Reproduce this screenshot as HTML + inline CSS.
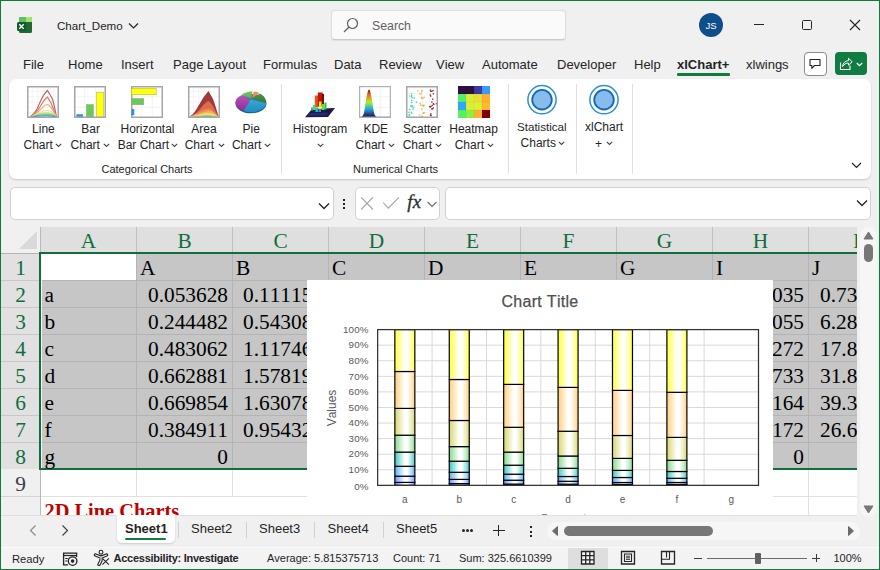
<!DOCTYPE html>
<html><head><meta charset="utf-8"><style>
html,body{margin:0;padding:0;}
body{width:880px;height:570px;position:relative;overflow:hidden;background:#f0f0f0;font-family:'Liberation Sans', sans-serif;}
.t{position:absolute;white-space:nowrap;line-height:0;font-kerning:none;}
</style></head><body>
<svg style="position:absolute;left:16px;top:16px" width="18" height="18" viewBox="0 0 18 18">
<rect x="3" y="1" width="13" height="16" rx="1.5" fill="#1f6b2f"/>
<path d="M4.5 1 H9.5 V6 H3 V2.5 A1.5 1.5 0 0 1 4.5 1Z" fill="#5ec35c"/>
<path d="M9.5 1 H14.5 A1.5 1.5 0 0 1 16 2.5 V6 H9.5Z" fill="#a6e26f"/>
<rect x="1" y="6" width="9" height="9" rx="1.5" fill="#0f5a2c"/>
<path d="M3.3 8.2 L7.7 12.8 M7.7 8.2 L3.3 12.8" stroke="#fff" stroke-width="1.4"/>
</svg>
<div class="t" style="left:57px;top:25.98px;font-size:11.6px;color:#242424;font-weight:400;font-family:'Liberation Sans', sans-serif;">Chart_Demo</div>
<svg style="position:absolute;left:128px;top:21.7px" width="11" height="8"><path d="M1 1.5 L5.5 6 L10 1.5" stroke="#242424" stroke-width="1.2" fill="none"/></svg>
<div style="position:absolute;left:331px;top:9.5px;width:235px;height:30.5px;box-sizing:border-box;background:#fafafa;border:1px solid #dedede;border-bottom-color:#c9c9c9;border-radius:4px;box-shadow:0 0.5px 1px rgba(0,0,0,0.08);"></div>
<svg style="position:absolute;left:343px;top:17px" width="16" height="16" viewBox="0 0 16 16"><circle cx="9.5" cy="6.5" r="5" stroke="#616161" stroke-width="1.2" fill="none"/><path d="M6 10 L1 15" stroke="#616161" stroke-width="1.3"/></svg>
<div class="t" style="left:372px;top:26.14px;font-size:12.3px;color:#616161;font-weight:400;font-family:'Liberation Sans', sans-serif;">Search</div>
<div style="position:absolute;left:699px;top:12.5px;width:24px;height:24px;border-radius:50%;background:#0f4d8c;"></div>
<div class="t" style="left:711px;transform:translateX(-50%);top:25.71px;font-size:9.5px;color:#ffffff;font-weight:400;font-family:'Liberation Sans', sans-serif;">JS</div>
<div style="position:absolute;left:754px;top:24px;width:10px;height:1px;background:#242424;"></div>
<div style="position:absolute;left:802px;top:20px;width:10px;height:10px;box-sizing:border-box;border:1px solid #242424;border-radius:1.5px;"></div>
<svg style="position:absolute;left:849px;top:19px" width="12" height="12"><path d="M1 1 L11 11 M11 1 L1 11" stroke="#242424" stroke-width="1.1"/></svg>
<div class="t" style="left:23px;top:64.80px;font-size:13px;color:#242424;font-weight:400;font-family:'Liberation Sans', sans-serif;">File</div>
<div class="t" style="left:68px;top:64.80px;font-size:13px;color:#242424;font-weight:400;font-family:'Liberation Sans', sans-serif;">Home</div>
<div class="t" style="left:121px;top:64.80px;font-size:13px;color:#242424;font-weight:400;font-family:'Liberation Sans', sans-serif;">Insert</div>
<div class="t" style="left:173px;top:64.80px;font-size:13px;color:#242424;font-weight:400;font-family:'Liberation Sans', sans-serif;">Page Layout</div>
<div class="t" style="left:263px;top:64.80px;font-size:13px;color:#242424;font-weight:400;font-family:'Liberation Sans', sans-serif;">Formulas</div>
<div class="t" style="left:334px;top:64.80px;font-size:13px;color:#242424;font-weight:400;font-family:'Liberation Sans', sans-serif;">Data</div>
<div class="t" style="left:379px;top:64.80px;font-size:13px;color:#242424;font-weight:400;font-family:'Liberation Sans', sans-serif;">Review</div>
<div class="t" style="left:436px;top:64.80px;font-size:13px;color:#242424;font-weight:400;font-family:'Liberation Sans', sans-serif;">View</div>
<div class="t" style="left:482px;top:64.80px;font-size:13px;color:#242424;font-weight:400;font-family:'Liberation Sans', sans-serif;">Automate</div>
<div class="t" style="left:557px;top:64.80px;font-size:13px;color:#242424;font-weight:400;font-family:'Liberation Sans', sans-serif;">Developer</div>
<div class="t" style="left:634px;top:64.80px;font-size:13px;color:#242424;font-weight:400;font-family:'Liberation Sans', sans-serif;">Help</div>
<div class="t" style="left:746px;top:64.80px;font-size:13px;color:#242424;font-weight:400;font-family:'Liberation Sans', sans-serif;">xlwings</div>
<div class="t" style="left:677px;top:64.80px;font-size:13px;color:#242424;font-weight:700;font-family:'Liberation Sans', sans-serif;">xlChart+</div>
<div style="position:absolute;left:677px;top:73px;width:53px;height:2.5px;background:#107c41;border-radius:1px;"></div>
<div style="position:absolute;left:803.5px;top:52px;width:23.5px;height:23.5px;box-sizing:border-box;background:#fff;border:1px solid #8a8a8a;border-radius:4px;"></div>
<svg style="position:absolute;left:808px;top:57px" width="15" height="14" viewBox="0 0 15 14"><path d="M2 2.5 H12 V8.5 H6.5 L3.8 11.3 V8.5 H2Z" stroke="#242424" stroke-width="1.1" fill="none" stroke-linejoin="round"/></svg>
<div style="position:absolute;left:835px;top:52px;width:32px;height:23px;background:#107c41;border-radius:4px;"></div>
<svg style="position:absolute;left:839px;top:56px" width="26" height="15" viewBox="0 0 26 15"><path d="M1.5 6.5 V13.5 H11 V9.5" stroke="#fff" stroke-width="1.1" fill="none"/><path d="M3.5 10.5 C3.8 6.8 6.5 4.8 9.5 4.6 V2.2 L13.2 5.8 L9.5 9.2 V7 C7.2 7 5 8.2 3.5 10.5Z" stroke="#fff" stroke-width="1" fill="none" stroke-linejoin="round"/><path d="M17.8 7 L20.5 9.6 L23.2 7" stroke="#fff" stroke-width="1.3" fill="none"/></svg>
<div style="position:absolute;left:9px;top:79px;width:862px;height:100px;background:#fff;border-radius:7px;box-shadow:0 1px 2px rgba(0,0,0,0.18);"></div>
<svg style="position:absolute;left:27px;top:86px" width="32" height="32" viewBox="0 0 32 32"><rect width="32" height="32" fill="#fff"/><path d="M5.3 1 V31 M1 5.3 H31" stroke="#f2f2f2" stroke-width="0.8"/><path d="M10.7 1 V31 M1 10.7 H31" stroke="#f2f2f2" stroke-width="0.8"/><path d="M16.0 1 V31 M1 16.0 H31" stroke="#f2f2f2" stroke-width="0.8"/><path d="M21.3 1 V31 M1 21.3 H31" stroke="#f2f2f2" stroke-width="0.8"/><path d="M26.7 1 V31 M1 26.7 H31" stroke="#f2f2f2" stroke-width="0.8"/><path d="M3 31 C6 29 8 27 10 23 L15 12 C17 8 19 6 20.5 4.5 L25 12 C27 17 28 24 29.5 31" stroke="#b86a66" stroke-width="1.2" fill="none"/><path d="M3.5 31 C7 29 9 27 11 24 L16 16 C18 13 19 12 20.5 11 L24 17 C26 22 28 27 29.5 31" stroke="#d77a5c" stroke-width="1.2" fill="none"/><path d="M4 31 C8 29 11 26 14 23 C17 20 19 18.5 20.5 18.5 C23 19 26 24 29.5 31" stroke="#f3a77a" stroke-width="1.2" fill="none"/><path d="M4 31 C9 28 14 25 20 24.5 C24 24.5 27 27 29.5 31" stroke="#f5d58a" stroke-width="1.2" fill="none"/><path d="M4 31 C10 28 15 27 19 27 C24 27 27 28 29.5 31" stroke="#c8e070" stroke-width="1.3" fill="none"/><path d="M4 31 C10 29 15 28.5 19 28.5 C24 28.5 27 29 29.5 31" stroke="#50d890" stroke-width="1.3" fill="none"/><path d="M4 31.2 C10 30 15 29.8 19 29.8 C24 29.8 27 30.2 29.5 31.2" stroke="#3a8ee0" stroke-width="1.3" fill="none"/><rect x="0.75" y="0.75" width="30.5" height="30.5" fill="none" stroke="#a6a6a6" stroke-width="1.5"/></svg>
<svg style="position:absolute;left:74px;top:86px" width="32" height="32" viewBox="0 0 32 32"><rect width="32" height="32" fill="#fff"/><path d="M10.7 1 V31 M1 10.7 H31" stroke="#f0f0f0" stroke-width="0.8"/><path d="M21.3 1 V31 M1 21.3 H31" stroke="#f0f0f0" stroke-width="0.8"/><rect x="2.3" y="28.3" width="6.8" height="3" rx="0.5" fill="#2f8fe6"/><rect x="12.3" y="18.5" width="7.2" height="12.8" fill="#6cc85c" stroke="#8fb070" stroke-width="0.5"/><rect x="22.6" y="6.2" width="7" height="25.1" fill="#ffff10" stroke="#b8b840" stroke-width="0.6"/><rect x="0.75" y="0.75" width="30.5" height="30.5" fill="none" stroke="#a6a6a6" stroke-width="1.5"/></svg>
<svg style="position:absolute;left:131px;top:86px" width="32" height="32" viewBox="0 0 32 32"><rect width="32" height="32" fill="#fff"/><path d="M10.7 1 V31 M1 10.7 H31" stroke="#f0f0f0" stroke-width="0.8"/><path d="M21.3 1 V31 M1 21.3 H31" stroke="#f0f0f0" stroke-width="0.8"/><rect x="0.75" y="0.75" width="30.5" height="30.5" fill="none" stroke="#a6a6a6" stroke-width="1.5"/><rect x="0.5" y="2.4" width="24.7" height="6.3" fill="#ffff10" stroke="#b8b840" stroke-width="0.6"/><rect x="0.5" y="12.5" width="12.3" height="6.3" fill="#6cc85c" stroke="#8fb070" stroke-width="0.5"/><rect x="0.5" y="23" width="2.8" height="6.3" rx="0.6" fill="#2f8fe6"/></svg>
<svg style="position:absolute;left:188px;top:86px" width="32" height="32" viewBox="0 0 32 32"><rect width="32" height="32" fill="#fff"/><path d="M5.3 1 V31 M1 5.3 H31" stroke="#f2f2f2" stroke-width="0.8"/><path d="M10.7 1 V31 M1 10.7 H31" stroke="#f2f2f2" stroke-width="0.8"/><path d="M16.0 1 V31 M1 16.0 H31" stroke="#f2f2f2" stroke-width="0.8"/><path d="M21.3 1 V31 M1 21.3 H31" stroke="#f2f2f2" stroke-width="0.8"/><path d="M26.7 1 V31 M1 26.7 H31" stroke="#f2f2f2" stroke-width="0.8"/><path d="M1 31.2 C4 29 6 27 8 24 L15 12 C17 9 19 7 20.5 5 L25 13 C27 18 29 25 30.8 31.2Z" fill="#9e3a3a"/><path d="M1 31.2 C5 29 9 27 12 23 C15 19 18 16 20.5 15 C23 16 26 22 30.8 31.2Z" fill="#e06a4c"/><path d="M1 31.2 C6 29 11 26 15 24 C18 23 20 22.5 21 22.5 C24 23 27 27 30.8 31.2Z" fill="#f08a50"/><path d="M1 31.2 C7 29 12 27 16 26 C19 25.2 21 25 22 25 C25 25.5 28 28 30.8 31.2Z" fill="#f8b070"/><path d="M1 31.2 C8 29.5 13 28 17 27.5 C20 27.2 22 27.2 23 27.4 C26 28 28.5 29.5 30.8 31.2Z" fill="#f0e070"/><path d="M1 31.2 C8 30.5 13 29.6 18 29.3 C22 29.2 26 29.6 30.8 31.2Z" fill="#70d860"/><path d="M1.5 31.2 C8 31 13 30.5 18 30.4 C23 30.4 26 30.7 30.5 31.2Z" fill="#40c8d8"/><rect x="0.75" y="0.75" width="30.5" height="30.5" fill="none" stroke="#a6a6a6" stroke-width="1.5"/></svg>
<svg style="position:absolute;left:233px;top:84px" width="36" height="36" viewBox="0 0 36 36"><defs><linearGradient id="pshade" x1="0" y1="0" x2="0" y2="1"><stop offset="0" stop-color="#fff" stop-opacity="0.25"/><stop offset="1" stop-color="#000" stop-opacity="0.15"/></linearGradient></defs><ellipse cx="18" cy="19.5" rx="15.5" ry="9.8" fill="#1a6aa0"/><path d="M17.5 15.5 L8.5 11.3 C5 13 2.5 15.5 2.5 18.5 C2.5 21.5 5 24.5 9.5 26.5 L10.5 27Z" fill="#b030b0"/><path d="M17.5 15.5 L10.5 27 C13 27.8 15.5 28.3 18 28.3 C25 28.3 31 25 32.8 20.5 L33 19Z" fill="#22a8e2"/><path d="M18.5 14.5 L33 19 C33 14.5 31 11.8 27 9.8Z" fill="#1e7a22"/><path d="M19 14 L26.5 9.2 C24.5 8.3 22.5 7.8 20.8 7.6Z" fill="#f07828"/><path d="M18 14.5 L19.5 7.5 C15 7.5 11 8.8 8.5 11Z" fill="#48b030"/><ellipse cx="18" cy="18.5" rx="15.5" ry="10.5" fill="url(#pshade)"/></svg>
<svg style="position:absolute;left:302px;top:84px" width="36" height="36" viewBox="0 0 36 36"><path d="M10 25 L33 24 L26 33 L3 33.2Z" fill="#1c1848"/><path d="M8 29 L27 28.5 L24 31.5 L6 31.8Z" fill="#2850c0" opacity="0.35"/><path d="M5 24 L10 3 M7 24 L12 4 H33 M10 8 H33 M10 12 H33 M9 16 H33 M8 20 H33" stroke="#f2f2f2" stroke-width="0.7" fill="none"/><rect x="12.8" y="11.5" width="3.6" height="12" fill="#f05018"/><rect x="15.8" y="8.5" width="5" height="14" fill="#b81810"/><rect x="20" y="10" width="2" height="11" fill="#800808"/><rect x="17" y="17.5" width="2.5" height="8" fill="#f0f020"/><rect x="11" y="21" width="2.6" height="5" fill="#40e060"/><rect x="20" y="20" width="2.5" height="6" fill="#60e040"/><rect x="22.5" y="18.5" width="2" height="7" fill="#30c060"/><rect x="13.5" y="24" width="2.5" height="4" fill="#20c0c0"/><rect x="16.5" y="25" width="2.5" height="3" fill="#2090e0"/><rect x="9" y="23.5" width="2" height="3" fill="#30b0a0"/></svg>
<svg style="position:absolute;left:359px;top:86px" width="32" height="32" viewBox="0 0 32 32"><defs><linearGradient id="kde" x1="0" y1="0" x2="0" y2="1"><stop offset="0" stop-color="#800010"/><stop offset="0.2" stop-color="#f07020"/><stop offset="0.45" stop-color="#b0f020"/><stop offset="0.7" stop-color="#20b0e0"/><stop offset="0.85" stop-color="#2a5a90"/><stop offset="1" stop-color="#201040"/></linearGradient></defs><rect width="32" height="32" fill="#fff"/><path d="M10.7 1 V31 M1 10.7 H31" stroke="#f0f0f0" stroke-width="0.8"/><path d="M21.3 1 V31 M1 21.3 H31" stroke="#f0f0f0" stroke-width="0.8"/><path d="M2 31 C4.5 30.5 5 27 5.8 22 C6.8 15 8.5 4 10 3.6 C11.5 4 13.2 15 14.2 22 C15 27 15.5 30.5 18 31Z" fill="url(#kde)"/><path d="M1 31.2 H31" stroke="#8080ff" stroke-width="1.2"/><rect x="0.6" y="0.6" width="30.8" height="30.8" fill="none" stroke="#b0b0b0" stroke-width="1.2"/></svg>
<svg style="position:absolute;left:406px;top:86px" width="32" height="32" viewBox="0 0 32 32"><rect width="32" height="32" fill="#fff"/><path d="M8.0 1 V31 M1 8.0 H31" stroke="#f0f0f0" stroke-width="0.8"/><path d="M16.0 1 V31 M1 16.0 H31" stroke="#f0f0f0" stroke-width="0.8"/><path d="M24.0 1 V31 M1 24.0 H31" stroke="#f0f0f0" stroke-width="0.8"/><rect x="3.0" y="9.4" width="1.3" height="1.3" fill="#3ad8b8"/><rect x="4.1" y="19.3" width="1.3" height="1.3" fill="#3ad8b8"/><rect x="4.7" y="19.9" width="1.3" height="1.3" fill="#3ad8b8"/><rect x="4.6" y="25.6" width="1.3" height="1.3" fill="#3ad8b8"/><rect x="5.0" y="10.0" width="1.3" height="1.3" fill="#3ad8b8"/><rect x="9.8" y="15.7" width="1.3" height="1.3" fill="#3ad8b8"/><rect x="2.2" y="25.6" width="1.3" height="1.3" fill="#3ad8b8"/><rect x="4.8" y="7.1" width="1.3" height="1.3" fill="#3ad8b8"/><rect x="5.8" y="20.1" width="1.3" height="1.3" fill="#3ad8b8"/><rect x="3.1" y="23.0" width="1.3" height="1.3" fill="#3ad8b8"/><rect x="7.0" y="21.1" width="1.3" height="1.3" fill="#3ad8b8"/><rect x="5.6" y="19.0" width="1.3" height="1.3" fill="#3ad8b8"/><rect x="7.6" y="11.1" width="1.3" height="1.3" fill="#3ad8b8"/><rect x="5.1" y="15.8" width="1.3" height="1.3" fill="#3ad8b8"/><rect x="6.3" y="22.4" width="1.3" height="1.3" fill="#3ad8b8"/><rect x="2.8" y="27.9" width="1.3" height="1.3" fill="#3ad8b8"/><rect x="5.0" y="13.7" width="1.3" height="1.3" fill="#3ad8b8"/><rect x="2.9" y="28.3" width="1.3" height="1.3" fill="#3ad8b8"/><rect x="5.2" y="26.7" width="1.3" height="1.3" fill="#3ad8b8"/><rect x="5.0" y="8.9" width="1.3" height="1.3" fill="#3ad8b8"/><rect x="2.4" y="29.1" width="1.3" height="1.3" fill="#3ad8b8"/><rect x="5.4" y="11.1" width="1.3" height="1.3" fill="#3ad8b8"/><rect x="13.4" y="16.7" width="1.3" height="1.3" fill="#f5b030"/><rect x="15.5" y="18.8" width="1.3" height="1.3" fill="#f5b030"/><rect x="16.5" y="18.8" width="1.3" height="1.3" fill="#f5b030"/><rect x="13.1" y="28.1" width="1.3" height="1.3" fill="#f5b030"/><rect x="16.9" y="26.1" width="1.3" height="1.3" fill="#f5b030"/><rect x="14.4" y="7.4" width="1.3" height="1.3" fill="#f5b030"/><rect x="17.9" y="26.2" width="1.3" height="1.3" fill="#f5b030"/><rect x="13.7" y="18.4" width="1.3" height="1.3" fill="#f5b030"/><rect x="15.2" y="22.3" width="1.3" height="1.3" fill="#f5b030"/><rect x="17.4" y="18.5" width="1.3" height="1.3" fill="#f5b030"/><rect x="17.4" y="10.7" width="1.3" height="1.3" fill="#f5b030"/><rect x="15.7" y="29.7" width="1.3" height="1.3" fill="#f5b030"/><rect x="15.0" y="5.4" width="1.3" height="1.3" fill="#f5b030"/><rect x="12.9" y="7.1" width="1.3" height="1.3" fill="#f5b030"/><rect x="14.9" y="10.9" width="1.3" height="1.3" fill="#f5b030"/><rect x="11.3" y="4.2" width="1.3" height="1.3" fill="#f5b030"/><rect x="16.9" y="19.6" width="1.3" height="1.3" fill="#f5b030"/><rect x="15.2" y="11.9" width="1.3" height="1.3" fill="#f5b030"/><rect x="16.4" y="26.8" width="1.3" height="1.3" fill="#f5b030"/><rect x="14.3" y="30.0" width="1.3" height="1.3" fill="#f5b030"/><rect x="16.4" y="11.4" width="1.3" height="1.3" fill="#f5b030"/><rect x="15.5" y="3.8" width="1.3" height="1.3" fill="#f5b030"/><rect x="23.7" y="8.3" width="1.3" height="1.3" fill="#902028"/><rect x="26.7" y="7.2" width="1.3" height="1.3" fill="#902028"/><rect x="26.4" y="4.1" width="1.3" height="1.3" fill="#902028"/><rect x="24.5" y="28.9" width="1.3" height="1.3" fill="#902028"/><rect x="24.2" y="27.2" width="1.3" height="1.3" fill="#902028"/><rect x="26.7" y="17.0" width="1.3" height="1.3" fill="#902028"/><rect x="23.8" y="20.4" width="1.3" height="1.3" fill="#902028"/><rect x="24.3" y="19.7" width="1.3" height="1.3" fill="#902028"/><rect x="23.8" y="28.4" width="1.3" height="1.3" fill="#902028"/><rect x="25.4" y="22.4" width="1.3" height="1.3" fill="#902028"/><rect x="24.1" y="9.4" width="1.3" height="1.3" fill="#902028"/><rect x="29.7" y="17.1" width="1.3" height="1.3" fill="#902028"/><rect x="27.2" y="17.8" width="1.3" height="1.3" fill="#902028"/><rect x="25.6" y="18.7" width="1.3" height="1.3" fill="#902028"/><rect x="23.8" y="3.5" width="1.3" height="1.3" fill="#902028"/><rect x="24.0" y="4.6" width="1.3" height="1.3" fill="#902028"/><rect x="23.1" y="19.9" width="1.3" height="1.3" fill="#902028"/><rect x="26.0" y="12.5" width="1.3" height="1.3" fill="#902028"/><rect x="25.5" y="22.1" width="1.3" height="1.3" fill="#902028"/><rect x="25.2" y="4.6" width="1.3" height="1.3" fill="#902028"/><rect x="26.7" y="21.3" width="1.3" height="1.3" fill="#902028"/><rect x="25.2" y="15.3" width="1.3" height="1.3" fill="#902028"/><rect x="0.75" y="0.75" width="30.5" height="30.5" fill="none" stroke="#a6a6a6" stroke-width="1.5"/></svg>
<svg style="position:absolute;left:458px;top:86px" width="32" height="32" viewBox="0 0 32 32"><rect x="0" y="0" width="8" height="8" fill="#2d0f40"/><rect x="8" y="0" width="8" height="8" fill="#2d0f40"/><rect x="16" y="0" width="8" height="8" fill="#3a3aa0"/><rect x="24" y="0" width="8" height="8" fill="#3a9aff"/><rect x="0" y="8" width="8" height="8" fill="#58ee68"/><rect x="8" y="8" width="8" height="8" fill="#d8ee38"/><rect x="16" y="8" width="8" height="8" fill="#ecdc38"/><rect x="24" y="8" width="8" height="8" fill="#ffb030"/><rect x="0" y="16" width="8" height="8" fill="#2ea8ff"/><rect x="8" y="16" width="8" height="8" fill="#dcee38"/><rect x="16" y="16" width="8" height="8" fill="#dcf038"/><rect x="24" y="16" width="8" height="8" fill="#ffb830"/><rect x="0" y="24" width="8" height="8" fill="#58f060"/><rect x="8" y="24" width="8" height="8" fill="#8cf040"/><rect x="16" y="24" width="8" height="8" fill="#ffb030"/><rect x="24" y="24" width="8" height="8" fill="#800000"/><path d="M0 8 H32 M0 16 H32 M0 24 H32 M8 0 V32 M16 0 V32 M24 0 V32" stroke="#000" stroke-opacity="0.08" stroke-width="0.6"/></svg>
<div style="position:absolute;left:281px;top:84px;width:1px;height:90px;background:#e0e0e0;"></div>
<div style="position:absolute;left:508px;top:84px;width:1px;height:90px;background:#e0e0e0;"></div>
<div style="position:absolute;left:576px;top:84px;width:1px;height:90px;background:#e0e0e0;"></div>
<div style="position:absolute;left:632px;top:84px;width:1px;height:90px;background:#e0e0e0;"></div>
<svg style="position:absolute;left:526px;top:84px" width="32" height="32"><circle cx="16" cy="15.7" r="14.1" fill="none" stroke="#2a92d8" stroke-width="1.5"/><circle cx="16" cy="15.7" r="9.8" fill="#86bdea" stroke="#1565c0" stroke-width="1.8"/></svg>
<svg style="position:absolute;left:588px;top:84px" width="32" height="32"><circle cx="16" cy="15.7" r="14.1" fill="none" stroke="#2a92d8" stroke-width="1.5"/><circle cx="16" cy="15.7" r="9.8" fill="#86bdea" stroke="#1565c0" stroke-width="1.8"/></svg>
<div class="t" style="left:43.4px;transform:translateX(-50%);top:128.59px;font-size:12px;color:#242424;font-weight:400;font-family:'Liberation Sans', sans-serif;">Line</div>
<div class="t" style="left:23.5px;top:144.84px;font-size:12px;color:#242424;font-weight:400;font-family:'Liberation Sans', sans-serif;">Chart</div>
<svg style="position:absolute;left:55px;top:142.5px" width="7" height="5"><path d="M0.8 0.8 L3.5 3.5 L6.2 0.8" stroke="#424242" stroke-width="1.1" fill="none"/></svg>
<div class="t" style="left:90.6px;transform:translateX(-50%);top:128.59px;font-size:12px;color:#242424;font-weight:400;font-family:'Liberation Sans', sans-serif;">Bar</div>
<div class="t" style="left:70.6px;top:144.84px;font-size:12px;color:#242424;font-weight:400;font-family:'Liberation Sans', sans-serif;">Chart</div>
<svg style="position:absolute;left:103px;top:142.5px" width="7" height="5"><path d="M0.8 0.8 L3.5 3.5 L6.2 0.8" stroke="#424242" stroke-width="1.1" fill="none"/></svg>
<div class="t" style="left:147.5px;transform:translateX(-50%);top:128.59px;font-size:12px;color:#242424;font-weight:400;font-family:'Liberation Sans', sans-serif;">Horizontal</div>
<div class="t" style="left:117.7px;top:144.84px;font-size:12px;color:#242424;font-weight:400;font-family:'Liberation Sans', sans-serif;">Bar Chart</div>
<svg style="position:absolute;left:170.5px;top:142.5px" width="7" height="5"><path d="M0.8 0.8 L3.5 3.5 L6.2 0.8" stroke="#424242" stroke-width="1.1" fill="none"/></svg>
<div class="t" style="left:204px;transform:translateX(-50%);top:128.59px;font-size:12px;color:#242424;font-weight:400;font-family:'Liberation Sans', sans-serif;">Area</div>
<div class="t" style="left:184.7px;top:144.84px;font-size:12px;color:#242424;font-weight:400;font-family:'Liberation Sans', sans-serif;">Chart</div>
<svg style="position:absolute;left:217.5px;top:142.5px" width="7" height="5"><path d="M0.8 0.8 L3.5 3.5 L6.2 0.8" stroke="#424242" stroke-width="1.1" fill="none"/></svg>
<div class="t" style="left:251.2px;transform:translateX(-50%);top:128.59px;font-size:12px;color:#242424;font-weight:400;font-family:'Liberation Sans', sans-serif;">Pie</div>
<div class="t" style="left:231.9px;top:144.84px;font-size:12px;color:#242424;font-weight:400;font-family:'Liberation Sans', sans-serif;">Chart</div>
<svg style="position:absolute;left:264px;top:142.5px" width="7" height="5"><path d="M0.8 0.8 L3.5 3.5 L6.2 0.8" stroke="#424242" stroke-width="1.1" fill="none"/></svg>
<div class="t" style="left:320px;transform:translateX(-50%);top:128.59px;font-size:12px;color:#242424;font-weight:400;font-family:'Liberation Sans', sans-serif;">Histogram</div>
<svg style="position:absolute;left:316.5px;top:143px" width="7" height="5"><path d="M0.8 0.8 L3.5 3.5 L6.2 0.8" stroke="#424242" stroke-width="1.1" fill="none"/></svg>
<div class="t" style="left:375.8px;transform:translateX(-50%);top:128.59px;font-size:12px;color:#242424;font-weight:400;font-family:'Liberation Sans', sans-serif;">KDE</div>
<div class="t" style="left:355.6px;top:144.84px;font-size:12px;color:#242424;font-weight:400;font-family:'Liberation Sans', sans-serif;">Chart</div>
<svg style="position:absolute;left:387.5px;top:142.5px" width="7" height="5"><path d="M0.8 0.8 L3.5 3.5 L6.2 0.8" stroke="#424242" stroke-width="1.1" fill="none"/></svg>
<div class="t" style="left:422px;transform:translateX(-50%);top:128.59px;font-size:12px;color:#242424;font-weight:400;font-family:'Liberation Sans', sans-serif;">Scatter</div>
<div class="t" style="left:402.7px;top:144.84px;font-size:12px;color:#242424;font-weight:400;font-family:'Liberation Sans', sans-serif;">Chart</div>
<svg style="position:absolute;left:434.5px;top:142.5px" width="7" height="5"><path d="M0.8 0.8 L3.5 3.5 L6.2 0.8" stroke="#424242" stroke-width="1.1" fill="none"/></svg>
<div class="t" style="left:473.6px;transform:translateX(-50%);top:128.59px;font-size:12px;color:#242424;font-weight:400;font-family:'Liberation Sans', sans-serif;">Heatmap</div>
<div class="t" style="left:454.7px;top:144.84px;font-size:12px;color:#242424;font-weight:400;font-family:'Liberation Sans', sans-serif;">Chart</div>
<svg style="position:absolute;left:486.5px;top:142.5px" width="7" height="5"><path d="M0.8 0.8 L3.5 3.5 L6.2 0.8" stroke="#424242" stroke-width="1.1" fill="none"/></svg>
<div class="t" style="left:541.8px;transform:translateX(-50%);top:126.58px;font-size:11.6px;color:#242424;font-weight:400;font-family:'Liberation Sans', sans-serif;">Statistical</div>
<div class="t" style="left:520.6px;top:142.84px;font-size:12px;color:#242424;font-weight:400;font-family:'Liberation Sans', sans-serif;">Charts</div>
<svg style="position:absolute;left:557.5px;top:140.5px" width="7" height="5"><path d="M0.8 0.8 L3.5 3.5 L6.2 0.8" stroke="#424242" stroke-width="1.1" fill="none"/></svg>
<div class="t" style="left:604px;transform:translateX(-50%);top:126.84px;font-size:12px;color:#242424;font-weight:400;font-family:'Liberation Sans', sans-serif;">xlChart</div>
<div class="t" style="left:595px;top:143.84px;font-size:12px;color:#242424;font-weight:400;font-family:'Liberation Sans', sans-serif;">+</div>
<svg style="position:absolute;left:606px;top:141px" width="7" height="5"><path d="M0.8 0.8 L3.5 3.5 L6.2 0.8" stroke="#424242" stroke-width="1.1" fill="none"/></svg>
<div class="t" style="left:147px;transform:translateX(-50%);top:168.69px;font-size:11px;color:#242424;font-weight:400;font-family:'Liberation Sans', sans-serif;">Categorical Charts</div>
<div class="t" style="left:395.5px;transform:translateX(-50%);top:168.69px;font-size:11px;color:#242424;font-weight:400;font-family:'Liberation Sans', sans-serif;">Numerical Charts</div>
<svg style="position:absolute;left:851px;top:162px" width="11" height="7"><path d="M1 1 L5.5 5.5 L10 1" stroke="#242424" stroke-width="1.2" fill="none"/></svg>
<div style="position:absolute;left:9.5px;top:187px;width:324.5px;height:33px;box-sizing:border-box;background:#fff;border:1px solid #d1d1d1;border-radius:5px;"></div>
<svg style="position:absolute;left:317.5px;top:201.5px" width="12" height="8"><path d="M1 1.5 L6 6.5 L11 1.5" stroke="#242424" stroke-width="1.3" fill="none"/></svg>
<div style="position:absolute;left:343px;top:199px;width:2px;height:2px;background:#242424;"></div>
<div style="position:absolute;left:343px;top:203px;width:2px;height:2px;background:#242424;"></div>
<div style="position:absolute;left:343px;top:207px;width:2px;height:2px;background:#242424;"></div>
<div style="position:absolute;left:355px;top:187px;width:84.5px;height:33px;box-sizing:border-box;background:#fff;border:1px solid #d1d1d1;border-radius:5px;"></div>
<svg style="position:absolute;left:360px;top:196px" width="14" height="15"><path d="M1.2 1.4 L12.9 13.5 M12.9 1.4 L1.2 13.5" stroke="#a3a3a3" stroke-width="1.1"/></svg>
<svg style="position:absolute;left:382px;top:196px" width="18" height="14"><path d="M1.2 6.5 L6.3 12.2 L17 1.4" stroke="#a3a3a3" stroke-width="1.1" fill="none"/></svg>
<div class="t" style="left:407.3px;top:202.09px;font-size:19px;color:#303030;font-weight:400;font-family:'Liberation Serif', serif;font-style:italic;letter-spacing:0.2px;-webkit-text-stroke:0.35px #303030;">fx</div>
<svg style="position:absolute;left:427px;top:201px" width="11" height="7"><path d="M0.7 1 L5 5.5 L9.5 1" stroke="#6a6a6a" stroke-width="1.1" fill="none"/></svg>
<div style="position:absolute;left:445px;top:187px;width:426px;height:33px;box-sizing:border-box;background:#fff;border:1px solid #d1d1d1;border-radius:5px;"></div>
<svg style="position:absolute;left:856px;top:199px" width="12" height="8"><path d="M1 1.5 L6 6.5 L11 1.5" stroke="#242424" stroke-width="1.3" fill="none"/></svg>
<div style="position:absolute;left:0;top:0;width:857px;height:515px;overflow:hidden;">
<div style="position:absolute;left:1px;top:227px;width:39px;height:26px;background:#f0f0f0;"></div>
<div style="position:absolute;left:40px;top:227px;width:817px;height:26px;background:#dfdfdf;"></div>
<div style="position:absolute;left:1px;top:253px;width:39px;height:216px;background:#e1e1e1;"></div>
<div style="position:absolute;left:1px;top:469px;width:39px;height:46px;background:#f0f0f0;"></div>
<div style="position:absolute;left:41px;top:254px;width:816px;height:215px;background:#c6c6c6;"></div>
<div style="position:absolute;left:41px;top:469px;width:816px;height:46px;background:#ffffff;"></div>
<div style="position:absolute;left:41px;top:254px;width:95px;height:26px;background:#ffffff;"></div>
<div style="position:absolute;left:136px;top:227px;width:1px;height:26px;background:#c0c0c0;"></div>
<div style="position:absolute;left:136px;top:254px;width:1px;height:215px;background:#b4b4b4;"></div>
<div style="position:absolute;left:136px;top:469px;width:1px;height:28px;background:#e1e1e1;"></div>
<div style="position:absolute;left:232px;top:227px;width:1px;height:26px;background:#c0c0c0;"></div>
<div style="position:absolute;left:232px;top:254px;width:1px;height:215px;background:#b4b4b4;"></div>
<div style="position:absolute;left:232px;top:469px;width:1px;height:28px;background:#e1e1e1;"></div>
<div style="position:absolute;left:328px;top:227px;width:1px;height:26px;background:#c0c0c0;"></div>
<div style="position:absolute;left:328px;top:254px;width:1px;height:215px;background:#b4b4b4;"></div>
<div style="position:absolute;left:328px;top:469px;width:1px;height:46px;background:#e1e1e1;"></div>
<div style="position:absolute;left:424px;top:227px;width:1px;height:26px;background:#c0c0c0;"></div>
<div style="position:absolute;left:424px;top:254px;width:1px;height:215px;background:#b4b4b4;"></div>
<div style="position:absolute;left:424px;top:469px;width:1px;height:46px;background:#e1e1e1;"></div>
<div style="position:absolute;left:520px;top:227px;width:1px;height:26px;background:#c0c0c0;"></div>
<div style="position:absolute;left:520px;top:254px;width:1px;height:215px;background:#b4b4b4;"></div>
<div style="position:absolute;left:520px;top:469px;width:1px;height:46px;background:#e1e1e1;"></div>
<div style="position:absolute;left:616px;top:227px;width:1px;height:26px;background:#c0c0c0;"></div>
<div style="position:absolute;left:616px;top:254px;width:1px;height:215px;background:#b4b4b4;"></div>
<div style="position:absolute;left:616px;top:469px;width:1px;height:46px;background:#e1e1e1;"></div>
<div style="position:absolute;left:712px;top:227px;width:1px;height:26px;background:#c0c0c0;"></div>
<div style="position:absolute;left:712px;top:254px;width:1px;height:215px;background:#b4b4b4;"></div>
<div style="position:absolute;left:712px;top:469px;width:1px;height:46px;background:#e1e1e1;"></div>
<div style="position:absolute;left:808px;top:227px;width:1px;height:26px;background:#c0c0c0;"></div>
<div style="position:absolute;left:808px;top:254px;width:1px;height:215px;background:#b4b4b4;"></div>
<div style="position:absolute;left:808px;top:469px;width:1px;height:46px;background:#e1e1e1;"></div>
<div style="position:absolute;left:40px;top:227px;width:1px;height:288px;background:#b9b9b9;"></div>
<div style="position:absolute;left:41px;top:280px;width:816px;height:1px;background:#b4b4b4;"></div>
<div style="position:absolute;left:1px;top:280px;width:39px;height:1px;background:#c8c8c8;"></div>
<div style="position:absolute;left:41px;top:307px;width:816px;height:1px;background:#b4b4b4;"></div>
<div style="position:absolute;left:1px;top:307px;width:39px;height:1px;background:#c8c8c8;"></div>
<div style="position:absolute;left:41px;top:334px;width:816px;height:1px;background:#b4b4b4;"></div>
<div style="position:absolute;left:1px;top:334px;width:39px;height:1px;background:#c8c8c8;"></div>
<div style="position:absolute;left:41px;top:361px;width:816px;height:1px;background:#b4b4b4;"></div>
<div style="position:absolute;left:1px;top:361px;width:39px;height:1px;background:#c8c8c8;"></div>
<div style="position:absolute;left:41px;top:388px;width:816px;height:1px;background:#b4b4b4;"></div>
<div style="position:absolute;left:1px;top:388px;width:39px;height:1px;background:#c8c8c8;"></div>
<div style="position:absolute;left:41px;top:415px;width:816px;height:1px;background:#b4b4b4;"></div>
<div style="position:absolute;left:1px;top:415px;width:39px;height:1px;background:#c8c8c8;"></div>
<div style="position:absolute;left:41px;top:442px;width:816px;height:1px;background:#b4b4b4;"></div>
<div style="position:absolute;left:1px;top:442px;width:39px;height:1px;background:#c8c8c8;"></div>
<div style="position:absolute;left:41px;top:496px;width:816px;height:1px;background:#e1e1e1;"></div>
<div style="position:absolute;left:1px;top:496px;width:39px;height:1px;background:#d4d4d4;"></div>
<div style="position:absolute;left:1px;top:253px;width:39px;height:1px;background:#b4b4b4;"></div>
<div style="position:absolute;left:41px;top:280px;width:1px;height:188px;background:#ffffff;"></div>
<svg style="position:absolute;left:18px;top:231px" width="20" height="19"><path d="M19 0 V18 H1Z" fill="#d9d9d9"/></svg>
<div style="position:absolute;left:39px;top:252px;width:818px;height:2px;background:#0f6e3b;"></div>
<div style="position:absolute;left:39px;top:468px;width:818px;height:2px;background:#0f6e3b;"></div>
<div style="position:absolute;left:39px;top:252px;width:2px;height:218px;background:#0f6e3b;"></div>
<div class="t" style="left:88.5px;transform:translateX(-50%);top:241.00px;font-size:21.33px;color:#0f6e3b;font-weight:400;font-family:'Liberation Serif', serif;">A</div>
<div class="t" style="left:184.5px;transform:translateX(-50%);top:241.00px;font-size:21.33px;color:#0f6e3b;font-weight:400;font-family:'Liberation Serif', serif;">B</div>
<div class="t" style="left:280.5px;transform:translateX(-50%);top:241.00px;font-size:21.33px;color:#0f6e3b;font-weight:400;font-family:'Liberation Serif', serif;">C</div>
<div class="t" style="left:376.5px;transform:translateX(-50%);top:241.00px;font-size:21.33px;color:#0f6e3b;font-weight:400;font-family:'Liberation Serif', serif;">D</div>
<div class="t" style="left:472.5px;transform:translateX(-50%);top:241.00px;font-size:21.33px;color:#0f6e3b;font-weight:400;font-family:'Liberation Serif', serif;">E</div>
<div class="t" style="left:568.5px;transform:translateX(-50%);top:241.00px;font-size:21.33px;color:#0f6e3b;font-weight:400;font-family:'Liberation Serif', serif;">F</div>
<div class="t" style="left:664.5px;transform:translateX(-50%);top:241.00px;font-size:21.33px;color:#0f6e3b;font-weight:400;font-family:'Liberation Serif', serif;">G</div>
<div class="t" style="left:760.5px;transform:translateX(-50%);top:241.00px;font-size:21.33px;color:#0f6e3b;font-weight:400;font-family:'Liberation Serif', serif;">H</div>
<div class="t" style="left:856.5px;transform:translateX(-50%);top:241.00px;font-size:21.33px;color:#0f6e3b;font-weight:400;font-family:'Liberation Serif', serif;">I</div>
<div class="t" style="left:20.5px;transform:translateX(-50%);top:267.80px;font-size:21.33px;color:#0f6e3b;font-weight:400;font-family:'Liberation Serif', serif;">1</div>
<div class="t" style="left:20.5px;transform:translateX(-50%);top:294.80px;font-size:21.33px;color:#0f6e3b;font-weight:400;font-family:'Liberation Serif', serif;">2</div>
<div class="t" style="left:20.5px;transform:translateX(-50%);top:321.80px;font-size:21.33px;color:#0f6e3b;font-weight:400;font-family:'Liberation Serif', serif;">3</div>
<div class="t" style="left:20.5px;transform:translateX(-50%);top:348.80px;font-size:21.33px;color:#0f6e3b;font-weight:400;font-family:'Liberation Serif', serif;">4</div>
<div class="t" style="left:20.5px;transform:translateX(-50%);top:375.80px;font-size:21.33px;color:#0f6e3b;font-weight:400;font-family:'Liberation Serif', serif;">5</div>
<div class="t" style="left:20.5px;transform:translateX(-50%);top:402.80px;font-size:21.33px;color:#0f6e3b;font-weight:400;font-family:'Liberation Serif', serif;">6</div>
<div class="t" style="left:20.5px;transform:translateX(-50%);top:429.80px;font-size:21.33px;color:#0f6e3b;font-weight:400;font-family:'Liberation Serif', serif;">7</div>
<div class="t" style="left:20.5px;transform:translateX(-50%);top:456.80px;font-size:21.33px;color:#0f6e3b;font-weight:400;font-family:'Liberation Serif', serif;">8</div>
<div class="t" style="left:20.5px;transform:translateX(-50%);top:483.80px;font-size:21.33px;color:#3c3c4c;font-weight:400;font-family:'Liberation Serif', serif;">9</div>
<div class="t" style="left:140px;top:267.80px;font-size:21.33px;color:#000;font-weight:400;font-family:'Liberation Serif', serif;">A</div>
<div class="t" style="left:236px;top:267.80px;font-size:21.33px;color:#000;font-weight:400;font-family:'Liberation Serif', serif;">B</div>
<div class="t" style="left:332px;top:267.80px;font-size:21.33px;color:#000;font-weight:400;font-family:'Liberation Serif', serif;">C</div>
<div class="t" style="left:428px;top:267.80px;font-size:21.33px;color:#000;font-weight:400;font-family:'Liberation Serif', serif;">D</div>
<div class="t" style="left:524px;top:267.80px;font-size:21.33px;color:#000;font-weight:400;font-family:'Liberation Serif', serif;">E</div>
<div class="t" style="left:620px;top:267.80px;font-size:21.33px;color:#000;font-weight:400;font-family:'Liberation Serif', serif;">G</div>
<div class="t" style="left:716px;top:267.80px;font-size:21.33px;color:#000;font-weight:400;font-family:'Liberation Serif', serif;">I</div>
<div class="t" style="left:812px;top:267.80px;font-size:21.33px;color:#000;font-weight:400;font-family:'Liberation Serif', serif;">J</div>
<div class="t" style="left:44.5px;top:294.80px;font-size:21.33px;color:#000;font-weight:400;font-family:'Liberation Serif', serif;">a</div>
<div class="t" style="left:228px;transform:translateX(-100%);top:294.80px;font-size:21.33px;color:#000;font-weight:400;font-family:'Liberation Serif', serif;">0.053628</div>
<div class="t" style="left:323px;transform:translateX(-100%);top:294.80px;font-size:21.33px;color:#000;font-weight:400;font-family:'Liberation Serif', serif;">0.111157</div>
<div class="t" style="left:804px;transform:translateX(-100%);top:294.80px;font-size:21.33px;color:#000;font-weight:400;font-family:'Liberation Serif', serif;">0.155035</div>
<div class="t" style="left:900px;transform:translateX(-100%);top:294.80px;font-size:21.33px;color:#000;font-weight:400;font-family:'Liberation Serif', serif;">0.737251</div>
<div class="t" style="left:44.5px;top:321.80px;font-size:21.33px;color:#000;font-weight:400;font-family:'Liberation Serif', serif;">b</div>
<div class="t" style="left:228px;transform:translateX(-100%);top:321.80px;font-size:21.33px;color:#000;font-weight:400;font-family:'Liberation Serif', serif;">0.244482</div>
<div class="t" style="left:323px;transform:translateX(-100%);top:321.80px;font-size:21.33px;color:#000;font-weight:400;font-family:'Liberation Serif', serif;">0.543081</div>
<div class="t" style="left:804px;transform:translateX(-100%);top:321.80px;font-size:21.33px;color:#000;font-weight:400;font-family:'Liberation Serif', serif;">0.851055</div>
<div class="t" style="left:900px;transform:translateX(-100%);top:321.80px;font-size:21.33px;color:#000;font-weight:400;font-family:'Liberation Serif', serif;">6.281542</div>
<div class="t" style="left:44.5px;top:348.80px;font-size:21.33px;color:#000;font-weight:400;font-family:'Liberation Serif', serif;">c</div>
<div class="t" style="left:228px;transform:translateX(-100%);top:348.80px;font-size:21.33px;color:#000;font-weight:400;font-family:'Liberation Serif', serif;">0.483062</div>
<div class="t" style="left:323px;transform:translateX(-100%);top:348.80px;font-size:21.33px;color:#000;font-weight:400;font-family:'Liberation Serif', serif;">1.117462</div>
<div class="t" style="left:804px;transform:translateX(-100%);top:348.80px;font-size:21.33px;color:#000;font-weight:400;font-family:'Liberation Serif', serif;">3.402272</div>
<div class="t" style="left:900px;transform:translateX(-100%);top:348.80px;font-size:21.33px;color:#000;font-weight:400;font-family:'Liberation Serif', serif;">17.84411</div>
<div class="t" style="left:44.5px;top:375.80px;font-size:21.33px;color:#000;font-weight:400;font-family:'Liberation Serif', serif;">d</div>
<div class="t" style="left:228px;transform:translateX(-100%);top:375.80px;font-size:21.33px;color:#000;font-weight:400;font-family:'Liberation Serif', serif;">0.662881</div>
<div class="t" style="left:323px;transform:translateX(-100%);top:375.80px;font-size:21.33px;color:#000;font-weight:400;font-family:'Liberation Serif', serif;">1.578193</div>
<div class="t" style="left:804px;transform:translateX(-100%);top:375.80px;font-size:21.33px;color:#000;font-weight:400;font-family:'Liberation Serif', serif;">5.837733</div>
<div class="t" style="left:900px;transform:translateX(-100%);top:375.80px;font-size:21.33px;color:#000;font-weight:400;font-family:'Liberation Serif', serif;">31.83142</div>
<div class="t" style="left:44.5px;top:402.80px;font-size:21.33px;color:#000;font-weight:400;font-family:'Liberation Serif', serif;">e</div>
<div class="t" style="left:228px;transform:translateX(-100%);top:402.80px;font-size:21.33px;color:#000;font-weight:400;font-family:'Liberation Serif', serif;">0.669854</div>
<div class="t" style="left:323px;transform:translateX(-100%);top:402.80px;font-size:21.33px;color:#000;font-weight:400;font-family:'Liberation Serif', serif;">1.630784</div>
<div class="t" style="left:804px;transform:translateX(-100%);top:402.80px;font-size:21.33px;color:#000;font-weight:400;font-family:'Liberation Serif', serif;">7.013164</div>
<div class="t" style="left:900px;transform:translateX(-100%);top:402.80px;font-size:21.33px;color:#000;font-weight:400;font-family:'Liberation Serif', serif;">39.31215</div>
<div class="t" style="left:44.5px;top:429.80px;font-size:21.33px;color:#000;font-weight:400;font-family:'Liberation Serif', serif;">f</div>
<div class="t" style="left:228px;transform:translateX(-100%);top:429.80px;font-size:21.33px;color:#000;font-weight:400;font-family:'Liberation Serif', serif;">0.384911</div>
<div class="t" style="left:323px;transform:translateX(-100%);top:429.80px;font-size:21.33px;color:#000;font-weight:400;font-family:'Liberation Serif', serif;">0.954321</div>
<div class="t" style="left:804px;transform:translateX(-100%);top:429.80px;font-size:21.33px;color:#000;font-weight:400;font-family:'Liberation Serif', serif;">4.889172</div>
<div class="t" style="left:900px;transform:translateX(-100%);top:429.80px;font-size:21.33px;color:#000;font-weight:400;font-family:'Liberation Serif', serif;">26.63721</div>
<div class="t" style="left:44.5px;top:456.80px;font-size:21.33px;color:#000;font-weight:400;font-family:'Liberation Serif', serif;">g</div>
<div class="t" style="left:228px;transform:translateX(-100%);top:456.80px;font-size:21.33px;color:#000;font-weight:400;font-family:'Liberation Serif', serif;">0</div>
<div class="t" style="left:804px;transform:translateX(-100%);top:456.80px;font-size:21.33px;color:#000;font-weight:400;font-family:'Liberation Serif', serif;">0</div>
<div class="t" style="left:44.5px;top:511.12px;font-size:20.4px;color:#c00000;font-weight:700;font-family:'Liberation Serif', serif;">2D Line Charts</div>
</div>
<div style="position:absolute;left:307px;top:280px;width:466px;height:235px;background:#fff;overflow:hidden;"><svg style="position:absolute;left:0;top:0" width="466" height="235"><defs><linearGradient id="g0" x1="0" x2="1" y1="0" y2="0"><stop offset="0" stop-color="#7a6cff"/><stop offset="0.22" stop-color="#7a6cff" stop-opacity="0.55"/><stop offset="0.5" stop-color="#7a6cff" stop-opacity="0"/><stop offset="0.62" stop-color="#7a6cff" stop-opacity="0"/><stop offset="0.88" stop-color="#7a6cff" stop-opacity="0.6"/><stop offset="1" stop-color="#7a6cff"/></linearGradient><linearGradient id="g1" x1="0" x2="1" y1="0" y2="0"><stop offset="0" stop-color="#6a96ff"/><stop offset="0.22" stop-color="#6a96ff" stop-opacity="0.55"/><stop offset="0.5" stop-color="#6a96ff" stop-opacity="0"/><stop offset="0.62" stop-color="#6a96ff" stop-opacity="0"/><stop offset="0.88" stop-color="#6a96ff" stop-opacity="0.6"/><stop offset="1" stop-color="#6a96ff"/></linearGradient><linearGradient id="g2" x1="0" x2="1" y1="0" y2="0"><stop offset="0" stop-color="#55b4ee"/><stop offset="0.22" stop-color="#55b4ee" stop-opacity="0.55"/><stop offset="0.5" stop-color="#55b4ee" stop-opacity="0"/><stop offset="0.62" stop-color="#55b4ee" stop-opacity="0"/><stop offset="0.88" stop-color="#55b4ee" stop-opacity="0.6"/><stop offset="1" stop-color="#55b4ee"/></linearGradient><linearGradient id="g3" x1="0" x2="1" y1="0" y2="0"><stop offset="0" stop-color="#3cc8c4"/><stop offset="0.22" stop-color="#3cc8c4" stop-opacity="0.55"/><stop offset="0.5" stop-color="#3cc8c4" stop-opacity="0"/><stop offset="0.62" stop-color="#3cc8c4" stop-opacity="0"/><stop offset="0.88" stop-color="#3cc8c4" stop-opacity="0.6"/><stop offset="1" stop-color="#3cc8c4"/></linearGradient><linearGradient id="g4" x1="0" x2="1" y1="0" y2="0"><stop offset="0" stop-color="#86d98e"/><stop offset="0.22" stop-color="#86d98e" stop-opacity="0.55"/><stop offset="0.5" stop-color="#86d98e" stop-opacity="0"/><stop offset="0.62" stop-color="#86d98e" stop-opacity="0"/><stop offset="0.88" stop-color="#86d98e" stop-opacity="0.6"/><stop offset="1" stop-color="#86d98e"/></linearGradient><linearGradient id="g5" x1="0" x2="1" y1="0" y2="0"><stop offset="0" stop-color="#d6d66a"/><stop offset="0.22" stop-color="#d6d66a" stop-opacity="0.55"/><stop offset="0.5" stop-color="#d6d66a" stop-opacity="0"/><stop offset="0.62" stop-color="#d6d66a" stop-opacity="0"/><stop offset="0.88" stop-color="#d6d66a" stop-opacity="0.6"/><stop offset="1" stop-color="#d6d66a"/></linearGradient><linearGradient id="g6" x1="0" x2="1" y1="0" y2="0"><stop offset="0" stop-color="#ffcf7a"/><stop offset="0.22" stop-color="#ffcf7a" stop-opacity="0.55"/><stop offset="0.5" stop-color="#ffcf7a" stop-opacity="0"/><stop offset="0.62" stop-color="#ffcf7a" stop-opacity="0"/><stop offset="0.88" stop-color="#ffcf7a" stop-opacity="0.6"/><stop offset="1" stop-color="#ffcf7a"/></linearGradient><linearGradient id="g7" x1="0" x2="1" y1="0" y2="0"><stop offset="0" stop-color="#ffff3c"/><stop offset="0.22" stop-color="#ffff3c" stop-opacity="0.55"/><stop offset="0.5" stop-color="#ffff3c" stop-opacity="0"/><stop offset="0.62" stop-color="#ffff3c" stop-opacity="0"/><stop offset="0.88" stop-color="#ffff3c" stop-opacity="0.6"/><stop offset="1" stop-color="#ffff3c"/></linearGradient></defs><line x1="70.64999999999998" x2="451.5" y1="189.78" y2="189.78" stroke="#d9d9d9" stroke-width="1"/><line x1="70.64999999999998" x2="451.5" y1="174.20" y2="174.20" stroke="#d9d9d9" stroke-width="1"/><line x1="70.64999999999998" x2="451.5" y1="158.63" y2="158.63" stroke="#d9d9d9" stroke-width="1"/><line x1="70.64999999999998" x2="451.5" y1="143.05" y2="143.05" stroke="#d9d9d9" stroke-width="1"/><line x1="70.64999999999998" x2="451.5" y1="127.48" y2="127.48" stroke="#d9d9d9" stroke-width="1"/><line x1="70.64999999999998" x2="451.5" y1="111.90" y2="111.90" stroke="#d9d9d9" stroke-width="1"/><line x1="70.64999999999998" x2="451.5" y1="96.33" y2="96.33" stroke="#d9d9d9" stroke-width="1"/><line x1="70.64999999999998" x2="451.5" y1="80.75" y2="80.75" stroke="#d9d9d9" stroke-width="1"/><line x1="70.64999999999998" x2="451.5" y1="65.18" y2="65.18" stroke="#d9d9d9" stroke-width="1"/><line x1="125.06" x2="125.06" y1="49.60000000000002" y2="205.35000000000002" stroke="#d9d9d9" stroke-width="1"/><line x1="179.46" x2="179.46" y1="49.60000000000002" y2="205.35000000000002" stroke="#d9d9d9" stroke-width="1"/><line x1="233.87" x2="233.87" y1="49.60000000000002" y2="205.35000000000002" stroke="#d9d9d9" stroke-width="1"/><line x1="288.28" x2="288.28" y1="49.60000000000002" y2="205.35000000000002" stroke="#d9d9d9" stroke-width="1"/><line x1="342.69" x2="342.69" y1="49.60000000000002" y2="205.35000000000002" stroke="#d9d9d9" stroke-width="1"/><line x1="397.09" x2="397.09" y1="49.60000000000002" y2="205.35000000000002" stroke="#d9d9d9" stroke-width="1"/><rect x="87.85" y="202.40" width="20" height="2.95" fill="#fff"/><rect x="87.85" y="202.40" width="20" height="2.95" fill="url(#g0)" stroke="#000" stroke-width="1.2"/><rect x="87.85" y="196.20" width="20" height="6.20" fill="#fff"/><rect x="87.85" y="196.20" width="20" height="6.20" fill="url(#g1)" stroke="#000" stroke-width="1.2"/><rect x="87.85" y="186.30" width="20" height="9.90" fill="#fff"/><rect x="87.85" y="186.30" width="20" height="9.90" fill="url(#g2)" stroke="#000" stroke-width="1.2"/><rect x="87.85" y="172.10" width="20" height="14.20" fill="#fff"/><rect x="87.85" y="172.10" width="20" height="14.20" fill="url(#g3)" stroke="#000" stroke-width="1.2"/><rect x="87.85" y="155.20" width="20" height="16.90" fill="#fff"/><rect x="87.85" y="155.20" width="20" height="16.90" fill="url(#g4)" stroke="#000" stroke-width="1.2"/><rect x="87.85" y="128.40" width="20" height="26.80" fill="#fff"/><rect x="87.85" y="128.40" width="20" height="26.80" fill="url(#g5)" stroke="#000" stroke-width="1.2"/><rect x="87.85" y="91.50" width="20" height="36.90" fill="#fff"/><rect x="87.85" y="91.50" width="20" height="36.90" fill="url(#g6)" stroke="#000" stroke-width="1.2"/><rect x="87.85" y="49.60" width="20" height="41.90" fill="#fff"/><rect x="87.85" y="49.60" width="20" height="41.90" fill="url(#g7)" stroke="#000" stroke-width="1.2"/><rect x="142.26" y="203.60" width="20" height="1.75" fill="#fff"/><rect x="142.26" y="203.60" width="20" height="1.75" fill="url(#g0)" stroke="#000" stroke-width="1.2"/><rect x="142.26" y="199.40" width="20" height="4.20" fill="#fff"/><rect x="142.26" y="199.40" width="20" height="4.20" fill="url(#g1)" stroke="#000" stroke-width="1.2"/><rect x="142.26" y="192.30" width="20" height="7.10" fill="#fff"/><rect x="142.26" y="192.30" width="20" height="7.10" fill="url(#g2)" stroke="#000" stroke-width="1.2"/><rect x="142.26" y="181.20" width="20" height="11.10" fill="#fff"/><rect x="142.26" y="181.20" width="20" height="11.10" fill="url(#g3)" stroke="#000" stroke-width="1.2"/><rect x="142.26" y="166.60" width="20" height="14.60" fill="#fff"/><rect x="142.26" y="166.60" width="20" height="14.60" fill="url(#g4)" stroke="#000" stroke-width="1.2"/><rect x="142.26" y="140.50" width="20" height="26.10" fill="#fff"/><rect x="142.26" y="140.50" width="20" height="26.10" fill="url(#g5)" stroke="#000" stroke-width="1.2"/><rect x="142.26" y="99.50" width="20" height="41.00" fill="#fff"/><rect x="142.26" y="99.50" width="20" height="41.00" fill="url(#g6)" stroke="#000" stroke-width="1.2"/><rect x="142.26" y="49.60" width="20" height="49.90" fill="#fff"/><rect x="142.26" y="49.60" width="20" height="49.90" fill="url(#g7)" stroke="#000" stroke-width="1.2"/><rect x="196.67" y="204.10" width="20" height="1.25" fill="#fff"/><rect x="196.67" y="204.10" width="20" height="1.25" fill="url(#g0)" stroke="#000" stroke-width="1.2"/><rect x="196.67" y="200.20" width="20" height="3.90" fill="#fff"/><rect x="196.67" y="200.20" width="20" height="3.90" fill="url(#g1)" stroke="#000" stroke-width="1.2"/><rect x="196.67" y="194.20" width="20" height="6.00" fill="#fff"/><rect x="196.67" y="194.20" width="20" height="6.00" fill="url(#g2)" stroke="#000" stroke-width="1.2"/><rect x="196.67" y="185.20" width="20" height="9.00" fill="#fff"/><rect x="196.67" y="185.20" width="20" height="9.00" fill="url(#g3)" stroke="#000" stroke-width="1.2"/><rect x="196.67" y="172.10" width="20" height="13.10" fill="#fff"/><rect x="196.67" y="172.10" width="20" height="13.10" fill="url(#g4)" stroke="#000" stroke-width="1.2"/><rect x="196.67" y="147.30" width="20" height="24.80" fill="#fff"/><rect x="196.67" y="147.30" width="20" height="24.80" fill="url(#g5)" stroke="#000" stroke-width="1.2"/><rect x="196.67" y="104.40" width="20" height="42.90" fill="#fff"/><rect x="196.67" y="104.40" width="20" height="42.90" fill="url(#g6)" stroke="#000" stroke-width="1.2"/><rect x="196.67" y="49.60" width="20" height="54.80" fill="#fff"/><rect x="196.67" y="49.60" width="20" height="54.80" fill="url(#g7)" stroke="#000" stroke-width="1.2"/><rect x="251.07" y="204.20" width="20" height="1.15" fill="#fff"/><rect x="251.07" y="204.20" width="20" height="1.15" fill="url(#g0)" stroke="#000" stroke-width="1.2"/><rect x="251.07" y="201.30" width="20" height="2.90" fill="#fff"/><rect x="251.07" y="201.30" width="20" height="2.90" fill="url(#g1)" stroke="#000" stroke-width="1.2"/><rect x="251.07" y="196.50" width="20" height="4.80" fill="#fff"/><rect x="251.07" y="196.50" width="20" height="4.80" fill="url(#g2)" stroke="#000" stroke-width="1.2"/><rect x="251.07" y="188.30" width="20" height="8.20" fill="#fff"/><rect x="251.07" y="188.30" width="20" height="8.20" fill="url(#g3)" stroke="#000" stroke-width="1.2"/><rect x="251.07" y="176.00" width="20" height="12.30" fill="#fff"/><rect x="251.07" y="176.00" width="20" height="12.30" fill="url(#g4)" stroke="#000" stroke-width="1.2"/><rect x="251.07" y="151.25" width="20" height="24.75" fill="#fff"/><rect x="251.07" y="151.25" width="20" height="24.75" fill="url(#g5)" stroke="#000" stroke-width="1.2"/><rect x="251.07" y="107.40" width="20" height="43.85" fill="#fff"/><rect x="251.07" y="107.40" width="20" height="43.85" fill="url(#g6)" stroke="#000" stroke-width="1.2"/><rect x="251.07" y="49.60" width="20" height="57.80" fill="#fff"/><rect x="251.07" y="49.60" width="20" height="57.80" fill="url(#g7)" stroke="#000" stroke-width="1.2"/><rect x="305.48" y="204.50" width="20" height="0.85" fill="#fff"/><rect x="305.48" y="204.50" width="20" height="0.85" fill="url(#g0)" stroke="#000" stroke-width="1.2"/><rect x="305.48" y="202.50" width="20" height="2.00" fill="#fff"/><rect x="305.48" y="202.50" width="20" height="2.00" fill="url(#g1)" stroke="#000" stroke-width="1.2"/><rect x="305.48" y="197.50" width="20" height="5.00" fill="#fff"/><rect x="305.48" y="197.50" width="20" height="5.00" fill="url(#g2)" stroke="#000" stroke-width="1.2"/><rect x="305.48" y="190.40" width="20" height="7.10" fill="#fff"/><rect x="305.48" y="190.40" width="20" height="7.10" fill="url(#g3)" stroke="#000" stroke-width="1.2"/><rect x="305.48" y="178.40" width="20" height="12.00" fill="#fff"/><rect x="305.48" y="178.40" width="20" height="12.00" fill="url(#g4)" stroke="#000" stroke-width="1.2"/><rect x="305.48" y="155.50" width="20" height="22.90" fill="#fff"/><rect x="305.48" y="155.50" width="20" height="22.90" fill="url(#g5)" stroke="#000" stroke-width="1.2"/><rect x="305.48" y="110.40" width="20" height="45.10" fill="#fff"/><rect x="305.48" y="110.40" width="20" height="45.10" fill="url(#g6)" stroke="#000" stroke-width="1.2"/><rect x="305.48" y="49.60" width="20" height="60.80" fill="#fff"/><rect x="305.48" y="49.60" width="20" height="60.80" fill="url(#g7)" stroke="#000" stroke-width="1.2"/><rect x="359.89" y="204.50" width="20" height="0.85" fill="#fff"/><rect x="359.89" y="204.50" width="20" height="0.85" fill="url(#g0)" stroke="#000" stroke-width="1.2"/><rect x="359.89" y="202.50" width="20" height="2.00" fill="#fff"/><rect x="359.89" y="202.50" width="20" height="2.00" fill="url(#g1)" stroke="#000" stroke-width="1.2"/><rect x="359.89" y="198.30" width="20" height="4.20" fill="#fff"/><rect x="359.89" y="198.30" width="20" height="4.20" fill="url(#g2)" stroke="#000" stroke-width="1.2"/><rect x="359.89" y="191.50" width="20" height="6.80" fill="#fff"/><rect x="359.89" y="191.50" width="20" height="6.80" fill="url(#g3)" stroke="#000" stroke-width="1.2"/><rect x="359.89" y="180.30" width="20" height="11.20" fill="#fff"/><rect x="359.89" y="180.30" width="20" height="11.20" fill="url(#g4)" stroke="#000" stroke-width="1.2"/><rect x="359.89" y="157.40" width="20" height="22.90" fill="#fff"/><rect x="359.89" y="157.40" width="20" height="22.90" fill="url(#g5)" stroke="#000" stroke-width="1.2"/><rect x="359.89" y="112.30" width="20" height="45.10" fill="#fff"/><rect x="359.89" y="112.30" width="20" height="45.10" fill="url(#g6)" stroke="#000" stroke-width="1.2"/><rect x="359.89" y="49.60" width="20" height="62.70" fill="#fff"/><rect x="359.89" y="49.60" width="20" height="62.70" fill="url(#g7)" stroke="#000" stroke-width="1.2"/><rect x="70.64999999999998" y="49.60000000000002" width="380.85" height="155.75" fill="none" stroke="#333333" stroke-width="1.25"/></svg></div>
<div class="t" style="left:540px;transform:translateX(-50%);top:301.96px;font-size:16px;color:#505050;font-weight:400;font-family:'Liberation Sans', sans-serif;letter-spacing:0.3px;-webkit-text-stroke:0.25px #505050;">Chart Title</div>
<div class="t" style="left:368.5px;transform:translateX(-100%);top:486.55px;font-size:9.8px;color:#595959;font-weight:400;font-family:'Liberation Sans', sans-serif;letter-spacing:0.1px;">0%</div>
<div class="t" style="left:368.5px;transform:translateX(-100%);top:469.98px;font-size:9.8px;color:#595959;font-weight:400;font-family:'Liberation Sans', sans-serif;letter-spacing:0.1px;">10%</div>
<div class="t" style="left:368.5px;transform:translateX(-100%);top:454.40px;font-size:9.8px;color:#595959;font-weight:400;font-family:'Liberation Sans', sans-serif;letter-spacing:0.1px;">20%</div>
<div class="t" style="left:368.5px;transform:translateX(-100%);top:438.83px;font-size:9.8px;color:#595959;font-weight:400;font-family:'Liberation Sans', sans-serif;letter-spacing:0.1px;">30%</div>
<div class="t" style="left:368.5px;transform:translateX(-100%);top:423.25px;font-size:9.8px;color:#595959;font-weight:400;font-family:'Liberation Sans', sans-serif;letter-spacing:0.1px;">40%</div>
<div class="t" style="left:368.5px;transform:translateX(-100%);top:407.68px;font-size:9.8px;color:#595959;font-weight:400;font-family:'Liberation Sans', sans-serif;letter-spacing:0.1px;">50%</div>
<div class="t" style="left:368.5px;transform:translateX(-100%);top:392.10px;font-size:9.8px;color:#595959;font-weight:400;font-family:'Liberation Sans', sans-serif;letter-spacing:0.1px;">60%</div>
<div class="t" style="left:368.5px;transform:translateX(-100%);top:376.53px;font-size:9.8px;color:#595959;font-weight:400;font-family:'Liberation Sans', sans-serif;letter-spacing:0.1px;">70%</div>
<div class="t" style="left:368.5px;transform:translateX(-100%);top:360.95px;font-size:9.8px;color:#595959;font-weight:400;font-family:'Liberation Sans', sans-serif;letter-spacing:0.1px;">80%</div>
<div class="t" style="left:368.5px;transform:translateX(-100%);top:345.38px;font-size:9.8px;color:#595959;font-weight:400;font-family:'Liberation Sans', sans-serif;letter-spacing:0.1px;">90%</div>
<div class="t" style="left:368.5px;transform:translateX(-100%);top:329.80px;font-size:9.8px;color:#595959;font-weight:400;font-family:'Liberation Sans', sans-serif;letter-spacing:0.1px;">100%</div>
<div class="t" style="left:331.6px;top:407.64px;font-size:12px;color:#595959;font-weight:400;font-family:'Liberation Sans', sans-serif;transform:translate(-50%,0) rotate(-90deg);transform-origin:50% 0;">Values</div>
<div class="t" style="left:404.8535714285714px;transform:translateX(-50%);top:499.54px;font-size:10px;color:#595959;font-weight:400;font-family:'Liberation Sans', sans-serif;">a</div>
<div class="t" style="left:459.26071428571424px;transform:translateX(-50%);top:499.54px;font-size:10px;color:#595959;font-weight:400;font-family:'Liberation Sans', sans-serif;">b</div>
<div class="t" style="left:513.6678571428571px;transform:translateX(-50%);top:499.54px;font-size:10px;color:#595959;font-weight:400;font-family:'Liberation Sans', sans-serif;">c</div>
<div class="t" style="left:568.075px;transform:translateX(-50%);top:499.54px;font-size:10px;color:#595959;font-weight:400;font-family:'Liberation Sans', sans-serif;">d</div>
<div class="t" style="left:622.4821428571429px;transform:translateX(-50%);top:499.54px;font-size:10px;color:#595959;font-weight:400;font-family:'Liberation Sans', sans-serif;">e</div>
<div class="t" style="left:676.8892857142857px;transform:translateX(-50%);top:499.54px;font-size:10px;color:#595959;font-weight:400;font-family:'Liberation Sans', sans-serif;">f</div>
<div class="t" style="left:731.2964285714286px;transform:translateX(-50%);top:499.54px;font-size:10px;color:#595959;font-weight:400;font-family:'Liberation Sans', sans-serif;">g</div>
<div style="position:absolute;left:541.5px;top:514px;width:5px;height:1px;background:#8a8a8a;"></div>
<div style="position:absolute;left:583.5px;top:514px;width:1px;height:1px;background:#c0c0c0;"></div>
<div style="position:absolute;left:1px;top:515px;width:878px;height:32px;background:#f0f0f0;"></div>
<div style="position:absolute;left:1px;top:515px;width:856px;height:1px;background:#e0e0e0;"></div>
<div style="position:absolute;left:859.5px;top:227px;width:17px;height:290px;background:#f6f6f6;border-radius:8.5px;"></div>
<svg style="position:absolute;left:863px;top:231px" width="11" height="9"><path d="M5.5 1 L10 8 H1Z" fill="#777" stroke="#777" stroke-width="1" stroke-linejoin="round"/></svg>
<div style="position:absolute;left:864px;top:244px;width:9px;height:17.5px;background:#777;border-radius:4.5px;"></div>
<svg style="position:absolute;left:863px;top:505px" width="11" height="9"><path d="M5.5 8 L10 1 H1Z" fill="#777" stroke="#777" stroke-width="1" stroke-linejoin="round"/></svg>
<svg style="position:absolute;left:28px;top:524px" width="10" height="13"><path d="M7.5 1.5 L2.5 6.5 L7.5 11.5" stroke="#8a8a8a" stroke-width="1.2" fill="none"/></svg>
<svg style="position:absolute;left:60px;top:524px" width="10" height="13"><path d="M2.5 1.5 L7.5 6.5 L2.5 11.5" stroke="#424242" stroke-width="1.2" fill="none"/></svg>
<div style="position:absolute;left:117px;top:515px;width:57.5px;height:27.5px;background:#fff;border-radius:0 0 5px 5px;box-shadow:0 1px 2px rgba(0,0,0,0.15);"></div>
<div class="t" style="left:125px;top:528.50px;font-size:13px;color:#242424;font-weight:700;font-family:'Liberation Sans', sans-serif;">Sheet1</div>
<div style="position:absolute;left:125px;top:538px;width:41px;height:2px;background:#107c41;border-radius:1px;"></div>
<div style="position:absolute;left:178px;top:522px;width:1px;height:16px;background:#d0d0d0;"></div>
<div style="position:absolute;left:246px;top:522px;width:1px;height:16px;background:#d0d0d0;"></div>
<div style="position:absolute;left:314px;top:522px;width:1px;height:16px;background:#d0d0d0;"></div>
<div style="position:absolute;left:383px;top:522px;width:1px;height:16px;background:#d0d0d0;"></div>
<div class="t" style="left:191px;top:528.50px;font-size:13px;color:#242424;font-weight:400;font-family:'Liberation Sans', sans-serif;">Sheet2</div>
<div class="t" style="left:259px;top:528.50px;font-size:13px;color:#242424;font-weight:400;font-family:'Liberation Sans', sans-serif;">Sheet3</div>
<div class="t" style="left:327.5px;top:528.50px;font-size:13px;color:#242424;font-weight:400;font-family:'Liberation Sans', sans-serif;">Sheet4</div>
<div class="t" style="left:396px;top:528.50px;font-size:13px;color:#242424;font-weight:400;font-family:'Liberation Sans', sans-serif;">Sheet5</div>
<div style="position:absolute;left:461.5px;top:529px;width:3px;height:3px;background:#242424;border-radius:50%;"></div>
<div style="position:absolute;left:465.5px;top:529px;width:3px;height:3px;background:#242424;border-radius:50%;"></div>
<div style="position:absolute;left:469.5px;top:529px;width:3px;height:3px;background:#242424;border-radius:50%;"></div>
<div style="position:absolute;left:493px;top:530px;width:11.5px;height:1.2px;background:#242424;"></div>
<div style="position:absolute;left:498.2px;top:524.5px;width:1.2px;height:11.5px;background:#242424;"></div>
<div style="position:absolute;left:530px;top:526.0px;width:2px;height:2px;background:#242424;"></div>
<div style="position:absolute;left:530px;top:530.5px;width:2px;height:2px;background:#242424;"></div>
<div style="position:absolute;left:530px;top:535.0px;width:2px;height:2px;background:#242424;"></div>
<div style="position:absolute;left:547px;top:522px;width:313px;height:17.5px;background:#f6f6f6;border-radius:8.75px;"></div>
<svg style="position:absolute;left:551px;top:525px" width="8" height="12"><path d="M6.5 1.5 V10.5 L1.5 6Z" fill="#6b6b6b" stroke="#6b6b6b" stroke-linejoin="round"/></svg>
<div style="position:absolute;left:564px;top:526px;width:149px;height:9.5px;background:#777;border-radius:5px;"></div>
<svg style="position:absolute;left:847px;top:525px" width="9" height="12"><path d="M1.5 1.5 V10.5 L6.5 6Z" fill="#6b6b6b" stroke="#6b6b6b" stroke-linejoin="round"/></svg>
<div style="position:absolute;left:1px;top:547px;width:878px;height:1px;background:#fbfbfb;"></div>
<div style="position:absolute;left:1px;top:548px;width:878px;height:21px;background:#f3f3f3;"></div>
<div class="t" style="left:12px;top:559.12px;font-size:11.2px;color:#242424;font-weight:400;font-family:'Liberation Sans', sans-serif;">Ready</div>
<svg style="position:absolute;left:62px;top:550.8px" width="17" height="16" viewBox="0 0 17 16"><path d="M6 13.8 H1.6 V2.2 H14.6 V6" stroke="#242424" stroke-width="1.3" fill="none"/><path d="M1.6 4.5 H14.6" stroke="#242424" stroke-width="1.2"/><path d="M3.3 7.5 H5.8 M3.3 10 H5.3" stroke="#242424" stroke-width="1.2"/><circle cx="10.6" cy="10.1" r="4.3" stroke="#242424" stroke-width="1.3" fill="#f3f3f3"/><circle cx="10.6" cy="10.1" r="1.8" fill="#242424"/></svg>
<svg style="position:absolute;left:93px;top:549px" width="18" height="17" viewBox="0 0 18 17"><path d="M2.5 6 L8 8.2 L13.5 6 M8 8.2 V11.5 L6 15.5" stroke="#242424" stroke-width="3.4" stroke-linecap="round" stroke-linejoin="round" fill="none"/><path d="M2.5 6 L8 8.2 L13.5 6 M8 8.2 V11.5 L6 15.5" stroke="#f3f3f3" stroke-width="1.2" stroke-linecap="round" stroke-linejoin="round" fill="none"/><circle cx="8" cy="3.2" r="1.9" stroke="#242424" stroke-width="1.1" fill="#f3f3f3"/><path d="M9.4 9.4 L15.9 15.6 M15.9 9.4 L9.4 15.6" stroke="#242424" stroke-width="1.1"/></svg>
<div class="t" style="left:113.5px;top:558.19px;font-size:11px;color:#242424;font-weight:700;font-family:'Liberation Sans', sans-serif;letter-spacing:-0.25px;">Accessibility: Investigate</div>
<div class="t" style="left:267px;top:558.19px;font-size:11px;color:#242424;font-weight:400;font-family:'Liberation Sans', sans-serif;">Average: 5.815375713</div>
<div class="t" style="left:393px;top:558.19px;font-size:11px;color:#242424;font-weight:400;font-family:'Liberation Sans', sans-serif;">Count: 71</div>
<div class="t" style="left:459px;top:558.19px;font-size:11px;color:#242424;font-weight:400;font-family:'Liberation Sans', sans-serif;">Sum: 325.6610399</div>
<div style="position:absolute;left:568px;top:548px;width:40px;height:21px;background:#dedede;"></div>
<svg style="position:absolute;left:580px;top:550px" width="16" height="16" viewBox="0 0 16 16"><rect x="1.5" y="1.5" width="12.5" height="12.5" fill="#f6f6f6"/><path d="M1.5 1.5 H14 V14 H1.5Z M1.5 5.7 H14 M1.5 9.8 H14 M5.7 1.5 V14 M9.8 1.5 V14" stroke="#242424" stroke-width="1.3" fill="none"/></svg>
<svg style="position:absolute;left:620px;top:550px" width="16" height="16" viewBox="0 0 16 16"><path d="M1.5 1.5 H14.5 V14 H1.5Z" stroke="#242424" stroke-width="1.3" fill="none"/><path d="M4.5 4 H11.5 V11.5 H4.5Z" stroke="#242424" stroke-width="1.1" fill="none"/><path d="M6 6.2 H10 M6 7.8 H10 M6 9.4 H10" stroke="#242424" stroke-width="0.9"/></svg>
<svg style="position:absolute;left:660px;top:550px" width="16" height="16" viewBox="0 0 16 16"><path d="M1.5 1.5 H14.5 V14 H1.5Z" stroke="#242424" stroke-width="1.3" fill="none"/><path d="M6.5 1.5 V7.5 M9.5 1.5 V9.3 H1.5" stroke="#242424" stroke-width="1.1" fill="none"/></svg>
<div style="position:absolute;left:694px;top:557.5px;width:7.5px;height:1px;background:#3a3a3a;"></div>
<div style="position:absolute;left:707px;top:557.5px;width:100px;height:1px;background:#6b6b6b;"></div>
<div style="position:absolute;left:755px;top:553px;width:5.5px;height:11px;background:#606060;border-radius:1px;"></div>
<div style="position:absolute;left:812px;top:557.5px;width:8px;height:1px;background:#3a3a3a;"></div>
<div style="position:absolute;left:815.5px;top:553.5px;width:1px;height:8.5px;background:#3a3a3a;"></div>
<div class="t" style="left:833.5px;top:558.19px;font-size:11px;color:#242424;font-weight:400;font-family:'Liberation Sans', sans-serif;">100%</div>
<div style="position:absolute;left:0px;top:0px;width:880px;height:1px;background:#117a38;"></div>
<div style="position:absolute;left:0px;top:569px;width:880px;height:1px;background:#117a38;"></div>
<div style="position:absolute;left:0px;top:0px;width:1px;height:570px;background:#117a38;"></div>
<div style="position:absolute;left:879px;top:0px;width:1px;height:570px;background:#117a38;"></div>
</body></html>
